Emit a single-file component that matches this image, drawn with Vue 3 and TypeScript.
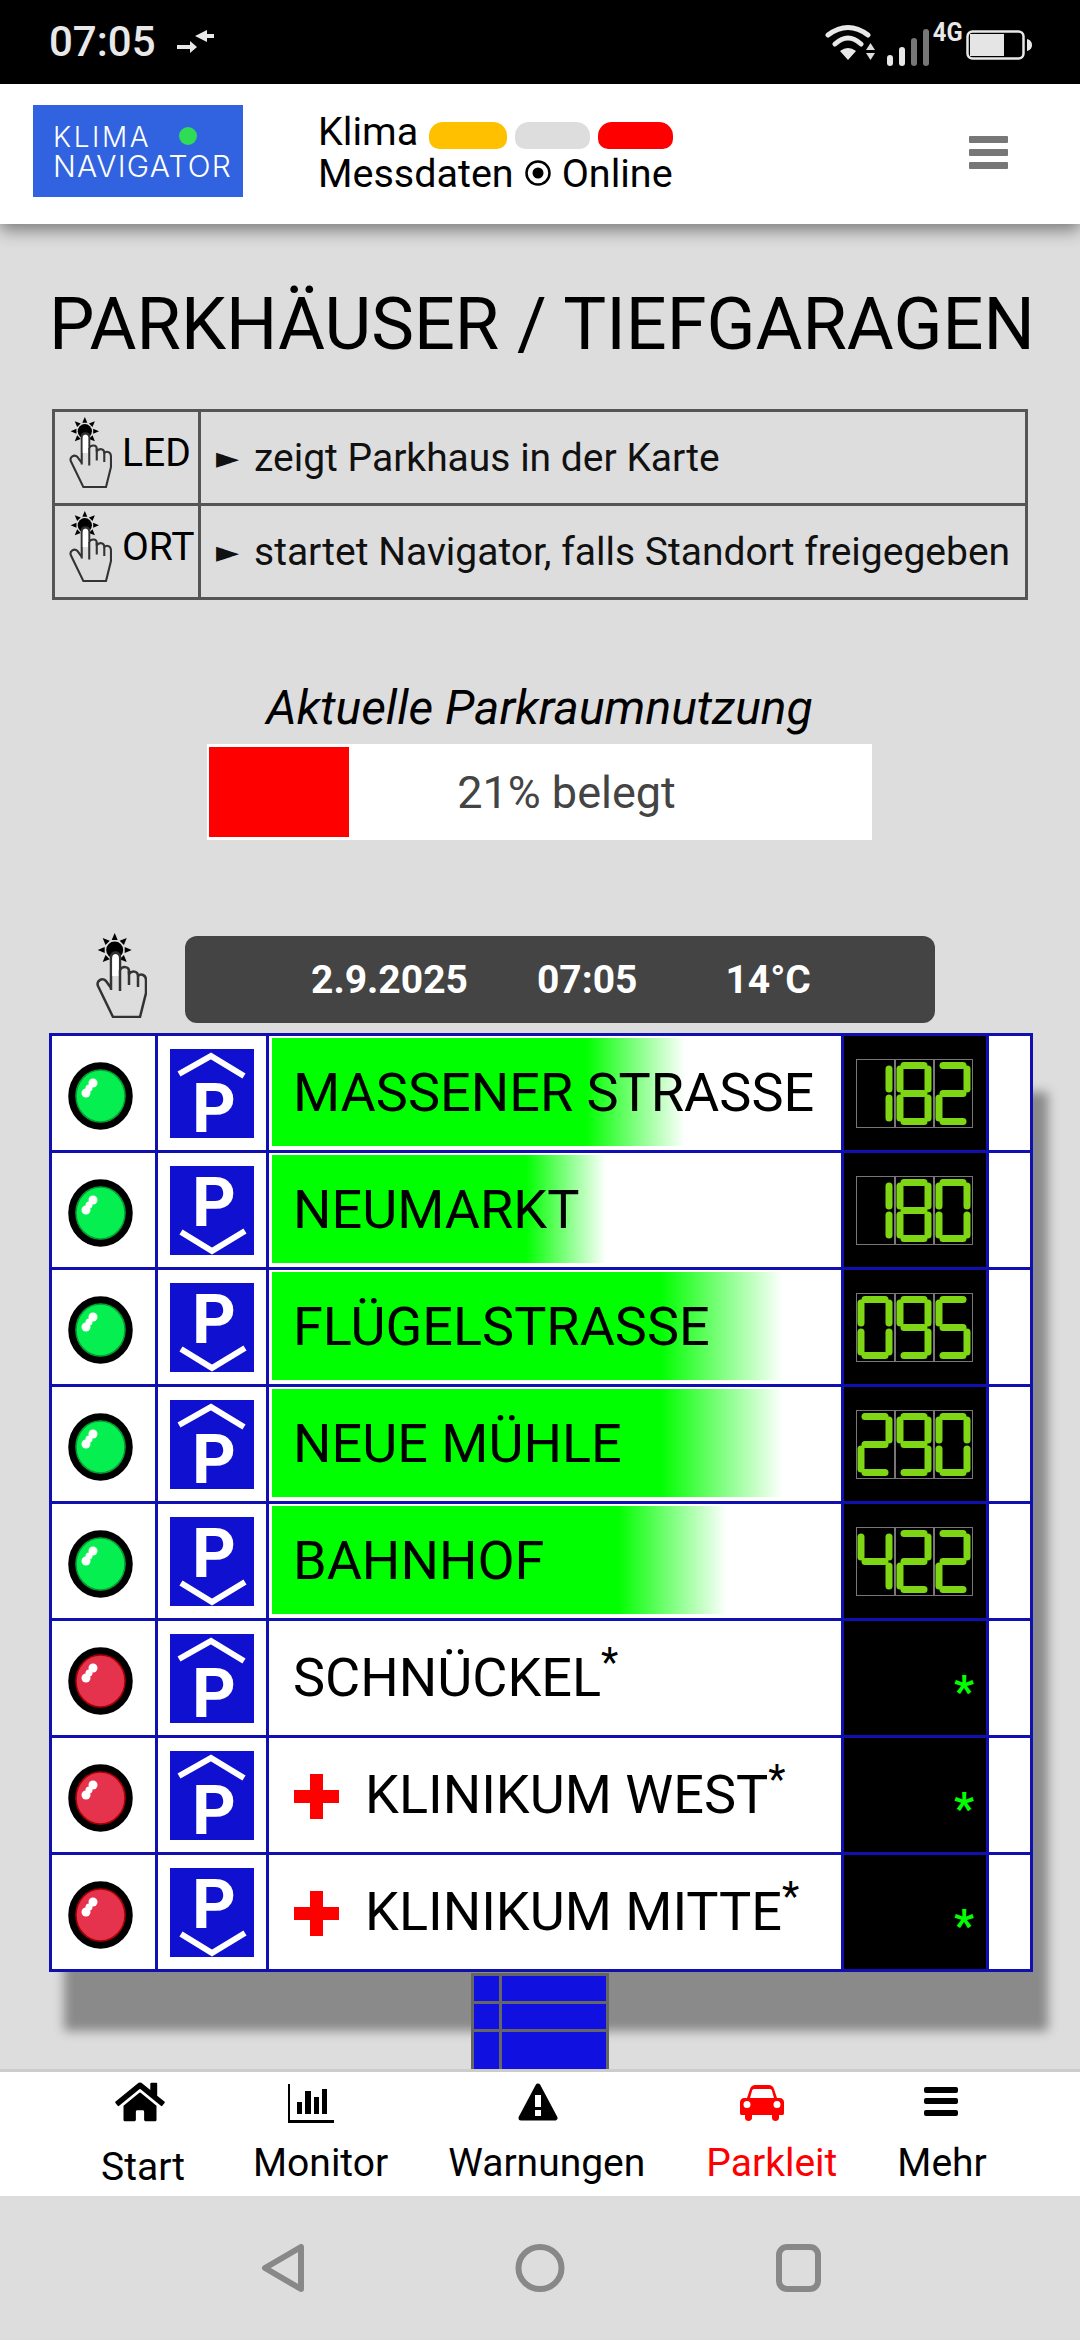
<template>
  <div class="app">
    <svg class="defs" aria-hidden="true">
      <symbol id="hand" viewBox="0 0 51 85">
        <polygon
          v-for="a in rayAngles"
          :key="a"
          points="18.7,0 15.7,7 21.7,7"
          fill="#000"
          :transform="`rotate(${a} 18.7 17)`" />
        <circle cx="18.7" cy="17" r="8.5" fill="#000" />
        <path
          d="M15 57V24C15 18 24 18 24 24V37C26 33 33 33 33 38V41C36 37 42 38 42 43C45 40 50 42 50 47V60L44 84H17L2 53C0 48 6 44 10 48L15 55"
          fill="none"
          stroke="#333"
          stroke-width="2.5"
          stroke-linejoin="round" />
        <path d="M16.2 43V24C16.2 20 22.8 20 22.8 24V43Z" fill="#fff" />
        <path d="M24 37V58M33 38V52M42 43V54" fill="none" stroke="#333" stroke-width="2.5" />
      </symbol>
    </svg>

    <div class="status-bar">
      <span class="clock">07:05</span>
      <svg class="sync" width="37" height="24" viewBox="0 0 37 24" fill="#e8e8e8">
        <polygon points="18,6 30,0 30,4 37,4 37,8 30,8 30,12" />
        <polygon points="20,17 13,11 13,15 0,15 0,19 13,19 13,23" />
      </svg>
      <span class="spacer"></span>
      <svg width="52" height="38" viewBox="0 0 52 38">
        <path d="M3 12Q23 -3 43 12M10 21Q23 9 36 21" fill="none" stroke="#e8e8e8" stroke-width="5" stroke-linecap="round" />
        <path d="M15 28Q23 22 31 28L23 37Z" fill="#e8e8e8" />
        <path d="M45.5 20L41 27H50ZM41 30H50L45.5 37Z" fill="#ddd" />
      </svg>
      <div class="signal">
        <i v-for="bar in signalBars" :key="bar.h" :class="{ dim: bar.dim }" :style="{ height: bar.h + 'px' }"></i>
      </div>
      <span class="net">4G</span>
      <svg class="battery" width="66" height="30" viewBox="0 0 66 30">
        <rect x="1.5" y="1.5" width="56" height="27" rx="5" fill="none" stroke="#e8e8e8" stroke-width="2.5" />
        <rect x="4" y="4" width="34" height="22" fill="#e5e5e5" />
        <path d="M61 9C65 10 66 13 66 15C66 17 65 20 61 21Z" fill="#e8e8e8" />
      </svg>
    </div>

    <header class="top">
      <div class="logo">
        <div class="logo-line">KLIMA<i class="logo-dot"></i></div>
        <div class="logo-line wide">NAVIGATOR</div>
      </div>
      <div class="top-text">
        <div class="top-row">
          Klima
          <i class="pill yellow"></i>
          <i class="pill gray"></i>
          <i class="pill red"></i>
        </div>
        <div class="top-row second">
          <span>Messdaten</span>
          <svg class="radio" width="28" height="28" viewBox="0 0 28 28">
            <circle cx="14" cy="14" r="11.5" fill="none" stroke="#000" stroke-width="2.5" />
            <circle cx="14" cy="14" r="5.5" fill="#000" />
          </svg>
          <span>Online</span>
        </div>
      </div>
      <div class="burger"><i></i><i></i><i></i></div>
    </header>

    <main class="content">
      <h1>PARKHÄUSER / TIEFGARAGEN</h1>

      <table class="info">
        <tbody>
          <tr v-for="row in infoRows" :key="row.label">
            <td class="info-key">
              <div class="info-key-inner">
                <svg class="info-hand"><use href="#hand" /></svg>
                <span>{{ row.label }}</span>
              </div>
            </td>
            <td class="info-val"><span class="arrow">►</span>{{ row.text }}</td>
          </tr>
        </tbody>
      </table>

      <h2>Aktuelle Parkraumnutzung</h2>
      <div class="usage">
        <div class="usage-fill" :style="{ width: usage + '%' }"></div>
        <span class="usage-text">{{ usage }}% belegt</span>
      </div>

      <div class="toolbar">
        <svg class="tool-hand"><use href="#hand" /></svg>
        <div class="datebox">
          <span>2.9.2025</span>
          <span>07:05</span>
          <span>14°C</span>
        </div>
      </div>

      <table class="garages">
        <colgroup>
          <col style="width: 106px" />
          <col style="width: 111px" />
          <col style="width: 575px" />
          <col style="width: 145px" />
          <col style="width: 44px" />
        </colgroup>
        <tbody>
          <tr v-for="g in garages" :key="g.name">
            <td>
              <svg class="led" width="65" height="68" viewBox="0 0 65 68">
                <ellipse cx="32.5" cy="34" rx="28.5" ry="30" :fill="g.free ? '#05f050' : '#e6334d'" stroke="#000" stroke-width="7.5" />
                <ellipse cx="32.5" cy="34" rx="24.5" ry="26" fill="none" :stroke="g.free ? '#0a9a30' : '#a00'" stroke-width="1.5" />
                <circle cx="18" cy="31" r="4.5" fill="#fff" />
                <circle cx="21" cy="26" r="3.5" fill="#fff" />
                <circle cx="25" cy="21" r="4.5" fill="#fff" />
              </svg>
            </td>
            <td class="center">
              <svg class="psign" width="84" height="89" viewBox="0 0 84 89">
                <rect width="84" height="89" fill="#1010d0" />
                <template v-if="g.up">
                  <path d="M9 25L41 7L74 27" fill="none" stroke="#fff" stroke-width="6" />
                  <text x="44" y="83" text-anchor="middle" class="p-letter">P</text>
                </template>
                <template v-else>
                  <text x="44" y="60" text-anchor="middle" class="p-letter">P</text>
                  <path d="M11 66L42 85L75 65" fill="none" stroke="#fff" stroke-width="6" />
                </template>
              </svg>
            </td>
            <td class="name-cell">
              <div
                class="name"
                :class="{ filled: g.fill > 0 }"
                :style="{ backgroundSize: g.fill + 'px 100%' }">
                <svg v-if="g.clinic" class="cross" width="45" height="45" viewBox="0 0 45 45">
                  <path d="M16 0H29V16H45V29H29V45H16V29H0V16H16Z" fill="#f00" />
                </svg>
                <span>{{ g.name }}<sup v-if="!g.free">*</sup></span>
              </div>
            </td>
            <td class="count">
              <div v-if="g.count" class="digits" :aria-label="g.count">
                <svg v-for="(d, i) in g.count" :key="i" width="39" height="69" viewBox="0 0 39 69">
                  <line
                    v-for="s in digitSegments(d)"
                    :key="s"
                    :x1="segments[s][0]"
                    :y1="segments[s][1]"
                    :x2="segments[s][2]"
                    :y2="segments[s][3]" />
                </svg>
              </div>
              <span v-else class="star">*</span>
            </td>
            <td></td>
          </tr>
        </tbody>
      </table>

      <div class="legend">
        <i></i><i></i><i></i><i></i><i class="tall"></i><i class="tall"></i>
      </div>
    </main>

    <nav class="tabs">
      <a
        v-for="t in tabs"
        :key="t.label"
        class="tab"
        :class="{ active: t.active, low: t.low }"
        :style="{ marginLeft: t.gap + 'px' }">
        <svg
          class="tab-icon"
          :width="t.w"
          :height="t.h"
          :viewBox="t.box"
          :style="{ marginRight: t.shift + 'px' }"
          fill="currentColor"
          v-html="t.icon"></svg>
        <span>{{ t.label }}</span>
      </a>
    </nav>

    <div class="android">
      <svg width="42" height="48" viewBox="0 0 42 48"><path d="M39 3V45L3 24Z" /></svg>
      <svg width="50" height="48" viewBox="0 0 50 48"><ellipse cx="25" cy="24" rx="21.5" ry="21" /></svg>
      <svg width="45" height="48" viewBox="0 0 45 48"><rect x="3" y="3" width="39" height="42" rx="8" /></svg>
    </div>
  </div>
</template>

<script setup lang="ts">
type Seg = 'a' | 'b' | 'c' | 'd' | 'e' | 'f' | 'g'

const rayAngles = [0, 45, 90, 135, 225, 270, 315]

const signalBars = [
  { h: 11, dim: false },
  { h: 19, dim: false },
  { h: 28, dim: true },
  { h: 37, dim: true },
]

const infoRows = [
  { label: 'LED', text: 'zeigt Parkhaus in der Karte' },
  { label: 'ORT', text: 'startet Navigator, falls Standort freigegeben' },
]

const usage = 21

const garages = [
  { name: 'MASSENER STRASSE', free: true, up: true, count: '182', fill: 413, clinic: false },
  { name: 'NEUMARKT', free: true, up: false, count: '180', fill: 334, clinic: false },
  { name: 'FLÜGELSTRASSE', free: true, up: false, count: '095', fill: 511, clinic: false },
  { name: 'NEUE MÜHLE', free: true, up: true, count: '290', fill: 511, clinic: false },
  { name: 'BAHNHOF', free: true, up: false, count: '422', fill: 455, clinic: false },
  { name: 'SCHNÜCKEL', free: false, up: true, count: '', fill: 0, clinic: false },
  { name: 'KLINIKUM WEST', free: false, up: true, count: '', fill: 0, clinic: true },
  { name: 'KLINIKUM MITTE', free: false, up: false, count: '', fill: 0, clinic: true },
]

const segments: Record<Seg, number[]> = {
  a: [9, 6.5, 29, 6.5],
  b: [33, 10, 33, 30],
  c: [33, 39, 33, 59],
  d: [9, 62.5, 29, 62.5],
  e: [5, 39, 5, 59],
  f: [5, 10, 5, 30],
  g: [9, 34.5, 29, 34.5],
}

const digitMap: Record<string, string> = {
  '0': 'abcdef',
  '1': 'bc',
  '2': 'abged',
  '4': 'fgbc',
  '5': 'afgcd',
  '8': 'abcdefg',
  '9': 'abcdfg',
}

function digitSegments(d: string): Seg[] {
  return (digitMap[d] || '').split('') as Seg[]
}

const tabs = [
  {
    label: 'Start',
    low: true,
    active: false,
    gap: 0,
    shift: 6,
    w: 50,
    h: 44,
    box: '0 0 576 512',
    icon: '<path d="M280.37 148.26L96 300.11V464a16 16 0 0 0 16 16l112.06-.29a16 16 0 0 0 15.92-16V368a16 16 0 0 1 16-16h64a16 16 0 0 1 16 16v95.64a16 16 0 0 0 16 16.05L464 480a16 16 0 0 0 16-16V300L295.67 148.26a12.19 12.19 0 0 0-15.3 0zM571.6 251.47L488 182.56V44.05a12 12 0 0 0-12-12h-56a12 12 0 0 0-12 12v72.61L318.47 43a48 48 0 0 0-61 0L4.34 251.47a12 12 0 0 0-1.6 16.9l25.5 31A12 12 0 0 0 45.15 301l235.22-193.74a12.19 12.19 0 0 1 15.3 0L530.9 301a12 12 0 0 0 16.9-1.6l25.5-31a12 12 0 0 0-1.7-16.93z"/>',
  },
  {
    label: 'Monitor',
    low: false,
    active: false,
    gap: 68,
    shift: 20,
    w: 46,
    h: 44,
    box: '0 0 46 44',
    icon: '<path d="M0 4H2V40H46V43H0Z"/><rect x="9" y="22" width="5" height="12"/><rect x="17" y="11" width="6" height="23"/><rect x="26" y="17" width="5" height="17"/><rect x="34" y="9" width="5" height="25"/>',
  },
  {
    label: 'Warnungen',
    low: false,
    active: false,
    gap: 60,
    shift: 18,
    w: 40,
    h: 44,
    box: '0 0 40 44',
    icon: '<path d="M20 6L37 38H3Z" stroke="currentColor" stroke-width="5" stroke-linejoin="round"/><rect x="17" y="15" width="6" height="12" fill="#fff"/><rect x="17" y="30" width="6" height="6" fill="#fff"/>',
  },
  {
    label: 'Parkleit',
    low: false,
    active: true,
    gap: 61,
    shift: 20,
    w: 44,
    h: 44,
    box: '0 0 44 44',
    icon: '<path fill-rule="evenodd" d="M10 9C11 6 13 5 15 5H29C31 5 33 6 34 9L37 18H40C42 18 44 20 44 22V33C44 35 43 35 41 35H39V38C39 42 32 42 32 38V35H12V38C12 42 5 42 5 38V35H3C1 35 0 35 0 33V22C0 20 2 18 4 18H7ZM12 11L10 18H34L32 11C32 10 31 9 30 9H14C13 9 12 10 12 11ZM7 21A3.5 3.5 0 1 0 7 28A3.5 3.5 0 1 0 7 21ZM37 21A3.5 3.5 0 1 0 37 28A3.5 3.5 0 1 0 37 21Z"/>',
  },
  {
    label: 'Mehr',
    low: false,
    active: false,
    gap: 60,
    shift: 2,
    w: 34,
    h: 44,
    box: '0 0 34 44',
    icon: '<rect y="7" width="34" height="6" rx="2"/><rect y="18" width="34" height="6" rx="2"/><rect y="30" width="34" height="6" rx="2"/>',
  },
]
</script>

<style>
html,
body {
  margin: 0;
  background: #ddd;
}
</style>

<style scoped>
.app {
  width: 1080px;
  height: 2340px;
  display: flex;
  flex-direction: column;
  overflow: hidden;
  background: #ddd;
  color: #000;
  font-family: Roboto, "DejaVu Sans", sans-serif;
}

.defs {
  width: 0;
  height: 0;
  display: block;
  position: absolute;
}

.status-bar {
  height: 84px;
  flex: none;
  background: #000;
  color: #e8e8e8;
  display: flex;
  align-items: center;
  padding: 0 48px 0 49px;
  box-sizing: border-box;
}

.clock {
  font-size: 42px;
  font-weight: 500;
  line-height: 1;
}

.sync {
  margin-left: 21px;
}

.spacer {
  flex: 1;
}

.signal {
  display: flex;
  align-items: flex-end;
  gap: 6px;
  height: 37px;
  margin: 10px 0 0 10px;
}

.signal i {
  width: 6px;
  border-radius: 3px;
  background: #e8e8e8;
}

.signal i.dim {
  background: #777;
}

.net {
  font: 700 25px/1 "Liberation Sans Narrow", "Roboto", sans-serif;
  transform: scaleX(0.95);
  margin: -20px 0 0 3px;
}

.battery {
  margin-left: 3px;
  margin-top: 5px;
}

.top {
  height: 140px;
  flex: none;
  background: #fff;
  box-shadow: 0 6px 16px rgba(0, 0, 0, 0.45);
  display: flex;
  align-items: flex-start;
  position: relative;
  z-index: 2;
}

.logo {
  width: 210px;
  height: 92px;
  margin: 21px 0 0 33px;
  padding: 18px 0 0 20px;
  box-sizing: border-box;
  background: #3163e0;
  color: #fff;
  font-family: Inter, sans-serif;
  font-weight: 300;
  overflow: hidden;
}

.logo-line {
  font-size: 28px;
  letter-spacing: 2.6px;
  line-height: 29px;
  display: flex;
  align-items: center;
}

.logo-line.wide {
  font-size: 30px;
  letter-spacing: 1.2px;
}

.logo-dot {
  width: 18px;
  height: 18px;
  border-radius: 50%;
  background: #2fdc55;
  margin: 0 0 4px 28px;
}

.top-text {
  margin: 26px 0 0 75px;
  font-size: 39.5px;
}

.top-row {
  display: flex;
  align-items: center;
  gap: 8px;
  height: 42px;
}

.top-row.second {
  gap: 10px;
}

.radio {
  flex: none;
}

.pill {
  width: 78px;
  height: 27px;
  border-radius: 14px 14px 10px 10px;
  margin-top: 8px;
}

.pill.yellow {
  background: #ffc000;
  margin-left: 3px;
}

.pill.gray {
  background: #ddd;
  width: 75px;
}

.pill.red {
  background: #f00;
  width: 75px;
}

.burger {
  margin: 52px 0 0 auto;
  padding-right: 72px;
  display: flex;
  flex-direction: column;
  gap: 6px;
}

.burger i {
  display: block;
  width: 39px;
  height: 7px;
  border-radius: 1px;
  background: #777;
}

.content {
  flex: 1;
  min-height: 0;
  overflow: hidden;
  padding: 59px 50px 0 49px;
}

h1 {
  margin: 0;
  font-size: 72px;
  font-weight: 400;
  line-height: 84px;
  text-align: center;
  white-space: nowrap;
  color: #000;
}

.info {
  width: 976px;
  height: 191px;
  margin: 42px 0 0 3px;
  border-collapse: collapse;
  border: 3px solid #555;
  font-size: 39px;
  table-layout: fixed;
}

.info td {
  border: 3px solid #555;
  padding: 0;
}

.info-key {
  width: 143px;
}

.info-key-inner {
  display: flex;
  align-items: center;
  padding-bottom: 10px;
  white-space: nowrap;
}

.info-hand {
  width: 45px;
  height: 71px;
  margin: 0 9px 0 13px;
}

.info-val {
  padding-left: 15px !important;
  white-space: nowrap;
  color: #111;
}

.arrow {
  display: inline-block;
  width: 38px;
  font-family: "DejaVu Sans", sans-serif;
  font-size: 30px;
  vertical-align: 3px;
}

h2 {
  margin: 78px 0 0;
  font-size: 48px;
  font-weight: 400;
  font-style: italic;
  line-height: 60px;
  text-align: center;
}

.usage {
  width: 665px;
  height: 96px;
  margin: 6px auto 0;
  background: #fff;
  display: flex;
  align-items: center;
  position: relative;
}

.usage-fill {
  position: absolute;
  top: 3px;
  bottom: 3px;
  left: 2px;
  background: #f00;
}

.usage-text {
  width: 100%;
  padding-left: 54px;
  box-sizing: border-box;
  text-align: center;
  font-size: 45px;
  color: #444;
}

.toolbar {
  margin-top: 96px;
  display: flex;
  align-items: flex-start;
  height: 87px;
}

.tool-hand {
  width: 51px;
  height: 85px;
  margin: -3px 0 0 47px;
}

.datebox {
  width: 750px;
  height: 87px;
  margin-left: 38px;
  padding-left: 126px;
  box-sizing: border-box;
  background: #444;
  border-radius: 12px;
  color: #fff;
  font-size: 39px;
  font-weight: 700;
  display: flex;
  align-items: center;
}

.datebox span + span {
  margin-left: 69px;
}

.datebox span:last-child {
  margin-left: 88px;
}

.garages {
  width: 981px;
  margin-top: 10px;
  table-layout: fixed;
  border-collapse: collapse;
  background: #fff;
  box-shadow: 15px 59px 10px #8a8a8a;
}

.garages td {
  border: 3px solid #1010b0;
  height: 114px;
  padding: 0;
}

.led {
  display: block;
  margin: 6px 0 0 16px;
}

.center svg {
  display: block;
  margin: 0 auto;
}

.p-letter {
  fill: #fff;
  font-size: 68px;
  font-weight: 700;
  font-family: Roboto, sans-serif;
}

.garages .name-cell {
  padding: 0 3px;
}

.name {
  height: 108px;
  margin: 2px 0 4px;
  padding-left: 21px;
  display: flex;
  align-items: center;
  font-size: 54px;
  white-space: nowrap;
  background-repeat: no-repeat;
}

.name.filled {
  background-image: linear-gradient(to right, #0f0 76%, #fff);
}

.name sup {
  font-size: 40px;
  line-height: 0;
  vertical-align: 20px;
}

.cross {
  margin: 4px 26px 0 1px;
  flex: none;
}

.garages .count {
  background: #000;
  text-align: right;
}

.digits {
  display: flex;
  width: 117px;
  height: 69px;
  margin-left: 12px;
}

.digits svg {
  flex: none;
  box-sizing: border-box;
  outline: 1px solid #777;
  outline-offset: -1px;
}

.digits line {
  stroke: #7ed614;
  stroke-width: 7;
  stroke-linecap: round;
}

.star {
  color: #0f0;
  font-size: 44px;
  font-weight: 700;
  padding-right: 12px;
  position: relative;
  top: 14px;
}

.legend {
  width: 138px;
  margin: 1px auto 0;
  display: grid;
  grid-template-columns: 25px 1fr;
  grid-template-rows: 25px 25px 60px;
  gap: 3px;
  padding: 3px;
  box-sizing: border-box;
  background: #666;
}

.legend i {
  display: block;
  background: #1010e0;
}

.tabs {
  height: 127px;
  flex: none;
  box-sizing: border-box;
  border-top: 3px solid #ccc;
  background: #fff;
  display: flex;
  padding-left: 101px;
}

.tab {
  display: flex;
  flex-direction: column;
  align-items: center;
  font-size: 39px;
  line-height: 44px;
  padding-top: 8px;
  color: #000;
}

.tab.low span {
  margin-top: 4px;
}

.tab.active {
  color: #f00;
}

.tab-icon {
  flex: none;
  margin-bottom: 17px;
}

.android {
  height: 144px;
  flex: none;
  box-sizing: border-box;
  display: flex;
  align-items: flex-start;
  padding: 48px 0 0 262px;
  gap: 211px;
}

.android svg {
  fill: none;
  stroke: #888;
  stroke-width: 6;
  stroke-linejoin: round;
}
</style>
